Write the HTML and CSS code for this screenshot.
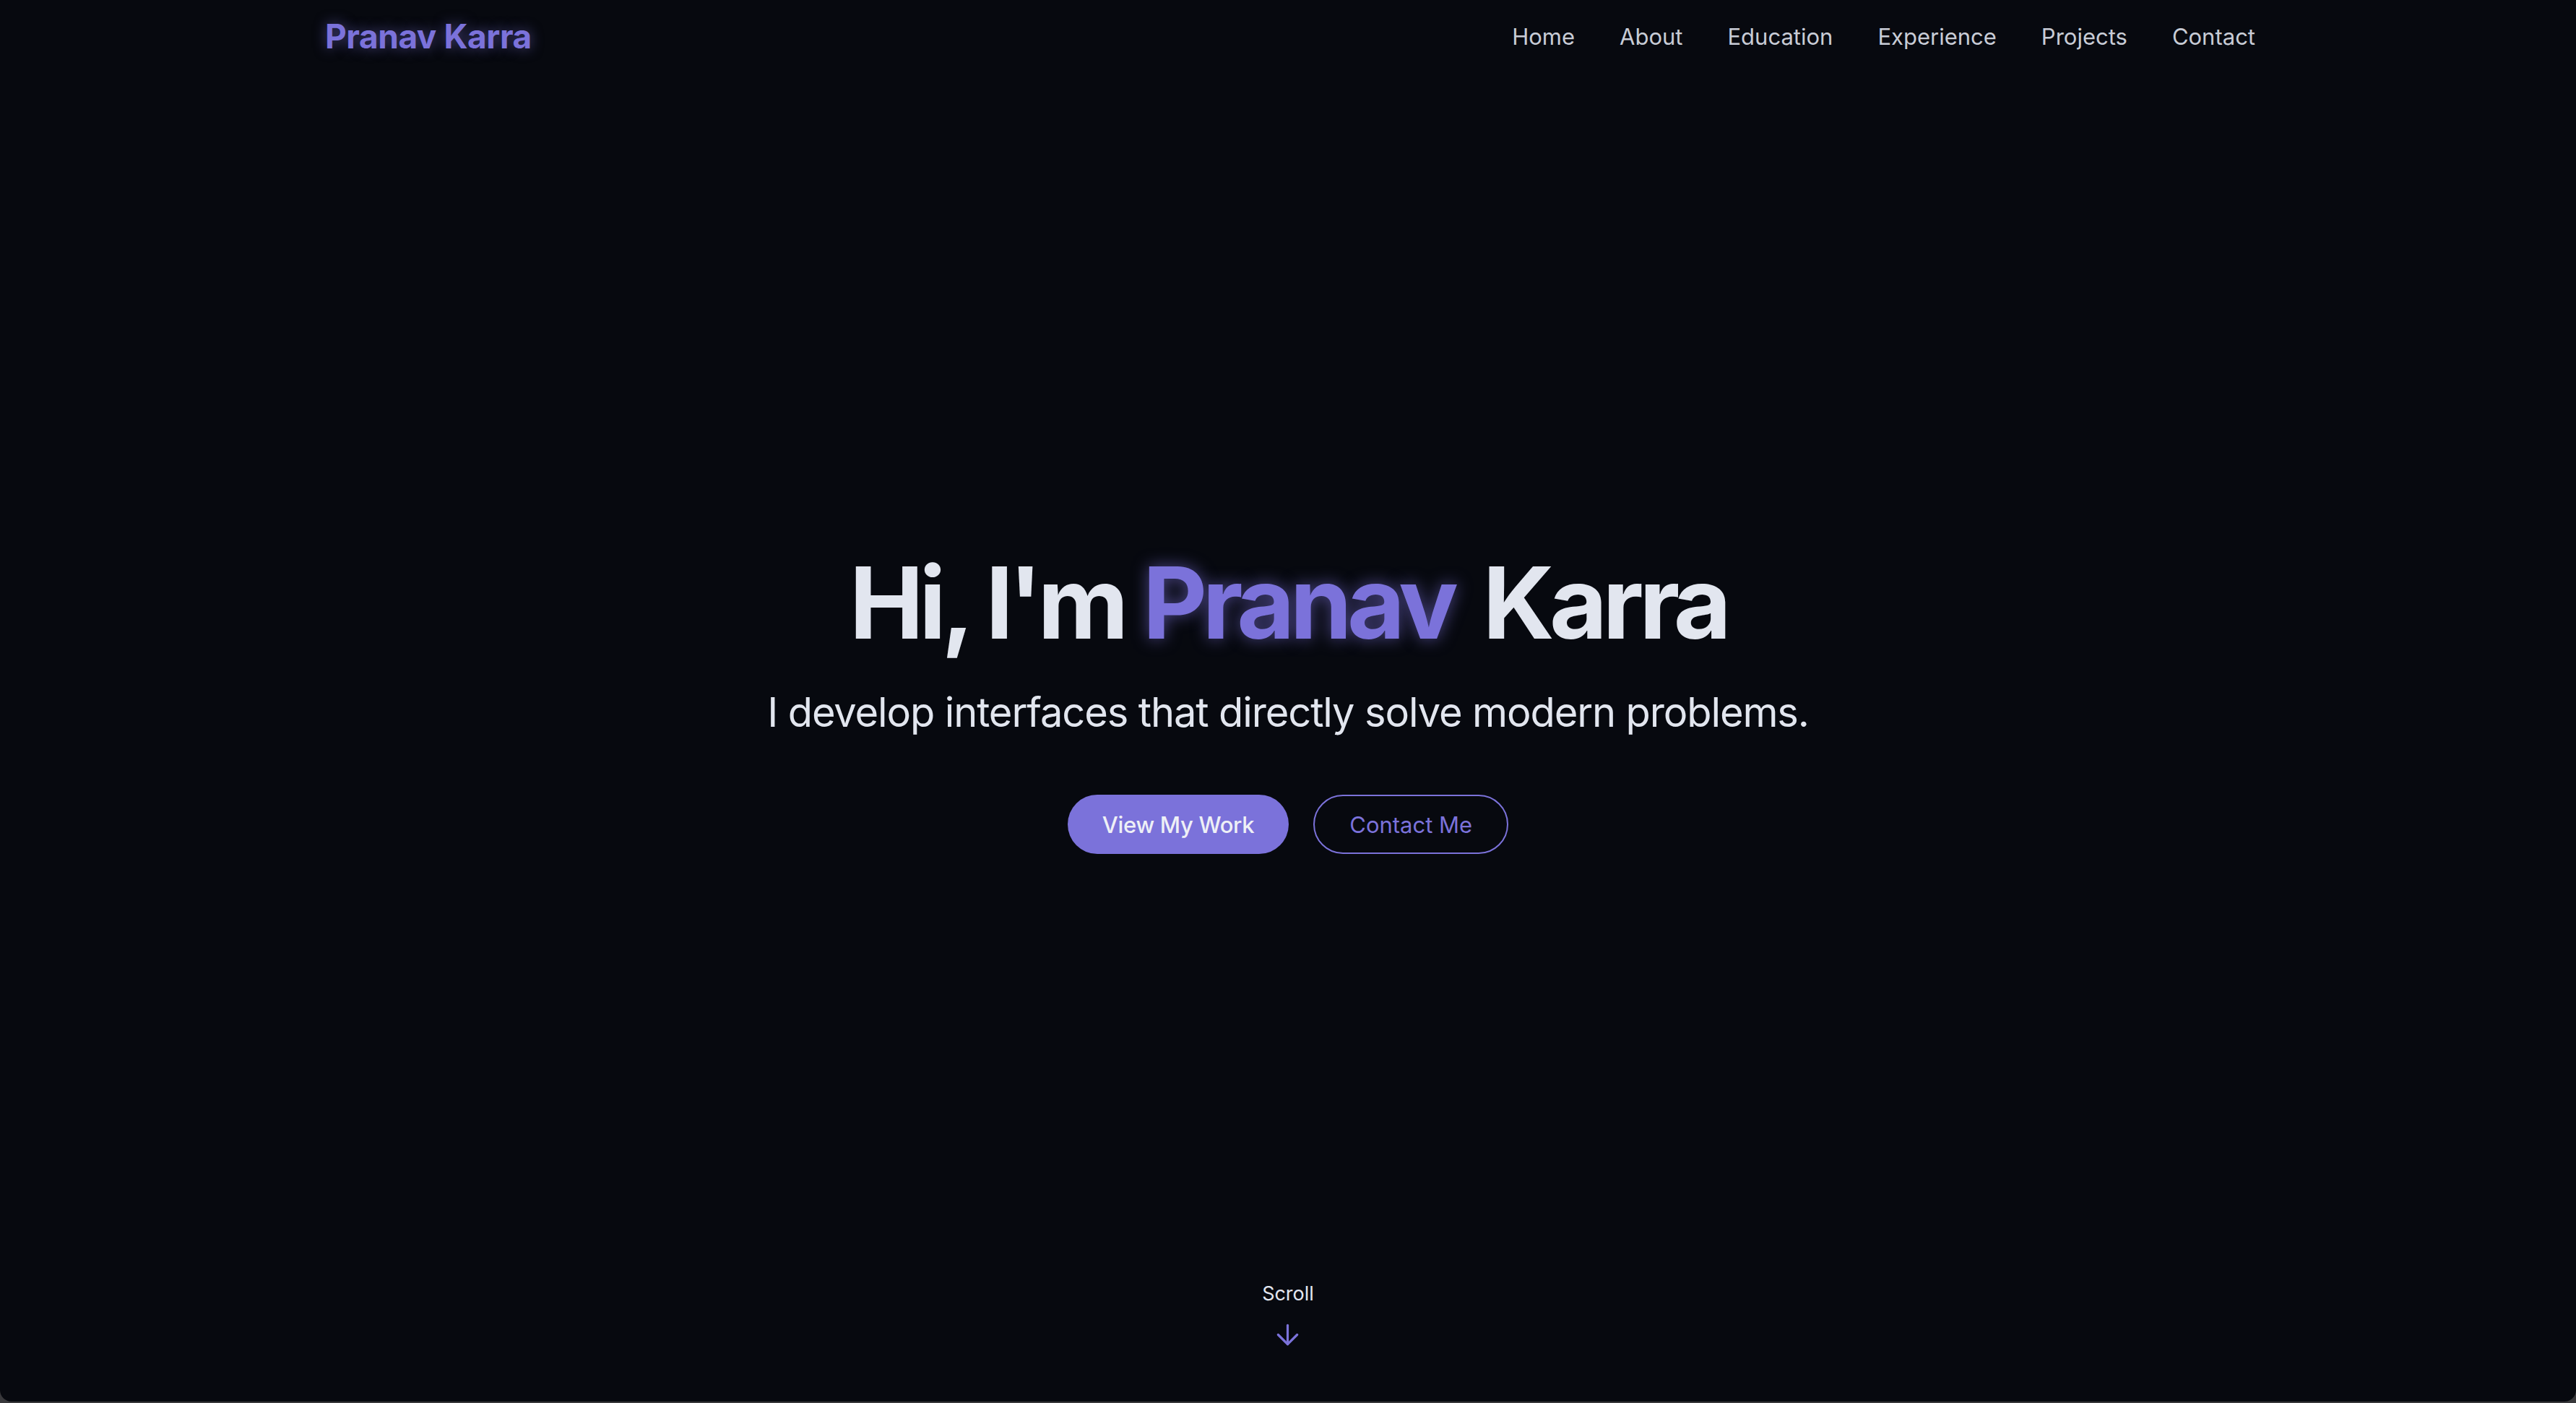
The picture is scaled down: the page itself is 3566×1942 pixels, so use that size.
FILE: index.html
```html
<!DOCTYPE html>
<html lang="en">
<head>
<meta charset="utf-8">
<title>Pranav Karra</title>
<link rel="stylesheet" href="styles.css">
</head>
<body>
<div class="page">
  <header class="header">
    <div class="header-inner">
      <a class="logo" href="#">Pranav Karra</a>
      <nav class="nav">
        <a href="#">Home</a>
        <a href="#">About</a>
        <a href="#">Education</a>
        <a href="#">Experience</a>
        <a href="#">Projects</a>
        <a href="#">Contact</a>
      </nav>
    </div>
  </header>
  <section class="hero">
    <div class="hero-content">
      <h1 class="title">Hi, I'm <span class="accent">Pranav</span> Karra</h1>
      <p class="subtitle">I develop interfaces that directly solve modern problems.</p>
      <div class="actions">
        <a class="btn btn-primary" href="#">View My Work</a>
        <a class="btn btn-outline" href="#">Contact Me</a>
      </div>
    </div>
    <div class="scroll">
      <span class="scroll-label">Scroll</span>
      <svg class="scroll-icon" viewBox="0 0 24 24" fill="none" stroke="currentColor" stroke-width="1.7" stroke-linecap="round" stroke-linejoin="round"><path d="M12 5v14"/><path d="m19 12-7 7-7-7"/></svg>
    </div>
  </section>
</div>
</body>
</html>
```
FILE: styles.css
```css
* { box-sizing: border-box; }
html, body { margin: 0; padding: 0; }
body {
  background: #38383b;
  font-family: Inter, "Noto Sans", sans-serif;
  color: #e2e8f0;
  height: 1942px;
  overflow: hidden;
}
a { text-decoration: none; color: inherit; }
.page {
  position: relative;
  height: 1940px;
  background: #07090f;
  border-radius: 0 0 16px 16px;
  overflow: hidden;
}
.header {
  position: absolute;
  top: 0; left: 0; right: 0;
  height: 100px;
  z-index: 5;
}
.header-inner {
  height: 100%;
  margin: 0 444px 0 450px;
  display: flex;
  align-items: center;
  justify-content: space-between;
}
.logo {
  font-size: 46px;
  font-weight: 700;
  color: #7b72da;
  letter-spacing: -0.01em;
  text-shadow: 0 0 18px rgba(123, 114, 218, 0.55);
}
.nav {
  display: flex;
  gap: 62px;
}
.nav a {
  font-size: 31px;
  color: #c8ccd6;
}
.hero {
  height: 100%;
  display: grid;
  grid-template-rows: 1fr auto 1fr;
  justify-items: center;
}
.hero-content {
  grid-row: 2;
  display: flex;
  flex-direction: column;
  align-items: center;
  text-align: center;
}
.title {
  margin: 0;
  font-size: 138px;
  font-weight: 700;
  line-height: 1.1;
  letter-spacing: -0.048em;
  color: #e2e6ef;
}
.accent {
  color: #7b72da;
  text-shadow: 0 0 22px rgba(123, 114, 218, 0.6);
  margin-right: 14px;
}
.subtitle {
  margin: 40px 0 0;
  font-size: 56px;
  line-height: 1.3;
  color: #e2e6ef;
  letter-spacing: -0.02em;
}
.actions {
  margin-top: 78px;
  display: flex;
  gap: 34px;
}
.btn {
  height: 82px;
  padding: 0 48px;
  border-radius: 41px;
  display: flex;
  align-items: center;
  font-size: 31px;
  font-weight: 500;
  letter-spacing: -0.01em;
}
.btn-primary {
  background: #7b72da;
  color: #eef0f6;
}
.btn-outline {
  border: 2.5px solid #7b72da;
  color: #7b72da;
  font-weight: 400;
  letter-spacing: 0;
}
.scroll {
  grid-row: 3;
  align-self: end;
  display: flex;
  flex-direction: column;
  align-items: center;
  gap: 18px;
  padding-bottom: 70px;
}
.scroll-label {
  font-size: 27px;
  color: #e2e6ef;
}
.scroll-icon {
  width: 45px;
  height: 45px;
  color: #7b72da;
}
```
